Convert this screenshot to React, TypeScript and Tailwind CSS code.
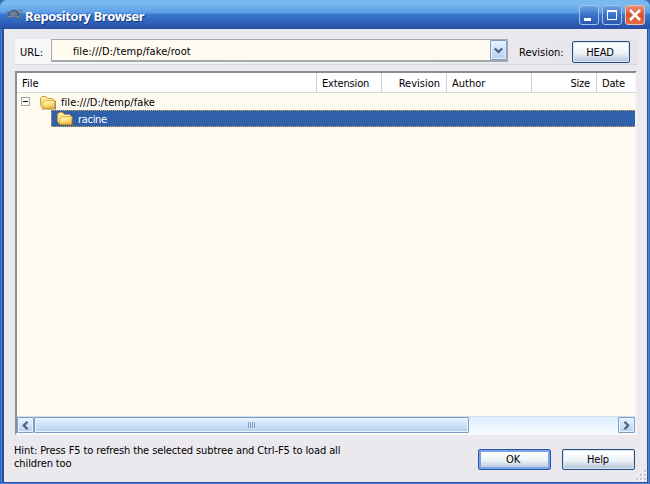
import type { ReactNode } from 'react';

function Folder() {
  return (
    <svg width="16" height="14" viewBox="0 0 16 14" className="shrink-0" aria-hidden="true">
      <defs>
        <linearGradient id="folderFill" x1="0" y1="0" x2="0.4" y2="1">
          <stop offset="0" stopColor="#fff6c0" />
          <stop offset="0.5" stopColor="#fde88e" />
          <stop offset="1" stopColor="#f1c04c" />
        </linearGradient>
      </defs>
      <path d="M2 12.9h13.3V5" fill="none" stroke="#7d642a" strokeWidth="1" />
      <path d="M.5 9.5v-7l1.5-2h3.5l2 2h5l1.5 1.5v8H2.5z" fill="#fbe38a" stroke="#c99324" strokeWidth=".9" />
      <path d="M3 12.2 2.6 6.3l2-.8 1-1H15l-.6 7.7z" fill="url(#folderFill)" stroke="#d6a336" strokeWidth=".8" />
      <path d="M2 1.6h3.3L7.2 3.5h5.3" fill="none" stroke="#fff7cd" strokeWidth=".8" />
    </svg>
  );
}

function Turtle() {
  return (
    <svg width="17" height="12" viewBox="0 0 17 12" className="shrink-0" aria-hidden="true">
      <path d="M2.5 6 .5 4.5 3 4zM3 7.5 1.2 9.5h3L6 8zm7 .5 1.5 2H14l-2-3zM11.5 5.5l2-3.7 2.5.4v1.6L14.3 5 12 7z" fill="#a09c95" stroke="#4b4f58" strokeWidth=".5" />
      <path d="M2.5 6.5 4.5 3.5 7 2.3h2.5l2.2 1.4.8 2.5L10.5 8H4z" fill="#59748f" stroke="#2e3d52" strokeWidth=".8" />
      <path d="m5 4.2 2 .8 3-1M7 5v2M4 6h6" fill="none" stroke="#8299ad" strokeWidth=".7" />
      <path d="M3.5 8.1h7.5" stroke="#a9a6a0" strokeWidth=".8" />
    </svg>
  );
}

function XpButton({ children, focused = false, className }: { children: ReactNode; focused?: boolean; className: string }) {
  return (
    <button
      className={`flex shrink-0 items-center justify-center rounded-[2px] border bg-linear-to-b from-white from-10% via-[#eef3f6] via-55% to-[#adc0d7] ${
        focused ? 'border-[#2856a5] shadow-[inset_0_0_0_2px_#7ba5e6]' : 'border-[#234d89] shadow-[inset_0_0_0_1px_#dce6ef]'
      } ${className}`}
    >
      {children}
    </button>
  );
}

function Chevron({ d }: { d: string }) {
  return (
    <svg width="9" height="9" viewBox="0 0 9 9" className="shrink-0" aria-hidden="true">
      <path d={d} fill="none" stroke="#4d6185" strokeWidth="2.3" />
    </svg>
  );
}

const scrollFace = 'border border-[#7c9fc8] rounded-[1px] bg-linear-to-b from-[#e8f3ff] via-[#cfe2fa] to-[#b5cfe9] shadow-[inset_0_0_0_1px_#e5f1fd]';

function CaptionButton({ children, close = false }: { children: ReactNode; close?: boolean }) {
  return (
    <button
      className={`h-5 w-5 rounded-[3px] border ${
        close ? 'border-[#efc0b3] bg-linear-to-b from-[#eb9075] via-[#d9512b] to-[#e36c46]' : 'border-[#a1c4ef] bg-linear-to-b from-[#70a5e1] via-[#3c72c9] to-[#2b57b0]'
      }`}
    >
      <svg width="18" height="18" viewBox="0 0 18 18" fill="none" stroke="white" shapeRendering="crispEdges">
        {children}
      </svg>
    </button>
  );
}

export default function App() {
  return (
    <div className="h-[484px] w-[650px] overflow-hidden bg-[#4468b1] font-['DejaVu_Sans_Condensed','DejaVu_Sans',sans-serif] text-[11px] leading-[13px] text-black [font-stretch:condensed]">
      <div className="flex h-full flex-col overflow-hidden rounded-t-[7px] bg-[#4d83d5]">
        <header className="flex h-[29px] shrink-0 items-center border-b border-[#284fa2] bg-[linear-gradient(to_bottom,#78b9ed_0px,#79b9ee_4px,#5b9ce6_13px,#397bd1_14px,#336bc2_19px,#284fa8_28px)] pr-[5px] pl-[6px]">
          <Turtle />
          <h1 className="ml-[2px] flex-1 pt-[3px] font-['Open_Sans',sans-serif] text-[13px] leading-4 font-bold tracking-[-0.44px] text-white [font-stretch:normal] [text-shadow:1px_1px_0_#17377d]">
            <span className="block w-max">Repository Browser</span>
          </h1>
          <div className="flex gap-[3px] pt-[2px]">
            <CaptionButton><path d="M4 13.5h7" strokeWidth="3" /></CaptionButton>
            <CaptionButton><path d="M4 5h10M4.5 4v10M13.5 4v10M4 13.5h10" strokeWidth="1" /><path d="M4 5h10" strokeWidth="2" /></CaptionButton>
            <CaptionButton close><path d="m4 4 10 10M14 4 4 14" strokeWidth="2.5" shapeRendering="auto" /></CaptionButton>
          </div>
        </header>

        <div className="flex min-h-0 flex-1 border-r border-l border-[#3666be] pr-px pb-px pl-px">
          <main className="flex min-w-0 flex-1 flex-col border-r border-b border-l-2 border-[#2850a2] bg-[#ebe9ee] pt-[10px] pr-[10px] pl-[11px]">
            <div className="flex h-[26px] shrink-0 border-b border-[#d5d3db] bg-linear-to-r from-[#f8f8fa] to-[#e6e4e9] pl-[5px]">
              <label className="w-[31px] shrink-0 pt-[7px]">URL:</label>
              <div className="flex h-[23px] w-[457px] shrink-0 border-[#a6a9ae] bg-[#fffbf0] [border-width:1px_1px_2px_1px]">
                <span className="flex-1 pt-[5px] pl-[21px] tracking-[0.07px]">file:///D:/temp/fake/root</span>
                <button className={`flex h-5 w-[17px] items-center justify-center ${scrollFace}`}><Chevron d="M.8 2.5 4.5 6 8.2 2.5" /></button>
              </div>
              <span className="w-16 shrink-0 pt-[7px] pl-[11px]">Revision:</span>
              <XpButton className="mt-[2px] h-[22px] w-[58px] pr-[2px] tracking-[-0.2px]">HEAD</XpButton>
            </div>

            <section className="mt-[6px] flex h-[364px] shrink-0 flex-col border-2 border-t-[#8b8d91] border-r-[#f2f1f3] border-b-[#f8f8fa] border-l-[#8b8d91] bg-[#fffbf0]">
              <div className="grid h-5 shrink-0 grid-cols-[300px_65px_65px_85px_65px_1fr] border-b border-[#d8d8dc] bg-white [&>span]:border-[#d1d1d5] [&>span]:pt-1">
                <span className="border-r pl-[5px]">File</span>
                <span className="border-r pl-[5px] tracking-[-0.15px]">Extension</span>
                <span className="border-r pr-[6px] text-right">Revision</span>
                <span className="border-r pl-[5px]">Author</span>
                <span className="border-r pr-[6px] text-right tracking-[-0.2px]">Size</span>
                <span className="pl-[5px] tracking-[-0.2px]">Date</span>
              </div>
              <div className="flex h-[17px] shrink-0 items-center pl-1">
                <span className="flex h-[9px] w-[9px] items-center justify-center border border-[#a6a6a2] bg-white"><i className="h-px w-[5px] bg-black" /></span>
                <span className="ml-[10px] flex pt-0.5"><Folder /></span>
                <span className="ml-[5px] pt-px tracking-[0.05px]">file:///D:/temp/fake</span>
              </div>
              <div className="ml-[34px] flex h-[17px] shrink-0 items-center border border-r-0 border-dotted border-[#d4a854] bg-[#3160aa] pl-[5px] text-white">
                <span className="pt-px"><Folder /></span><span className="ml-[5px] pt-px tracking-[-0.3px]">racine</span>
              </div>
              <div className="mt-auto flex h-[17px] shrink-0 border-t border-[#d0dfed] bg-linear-to-b from-[#dcecff] to-[#f8fbff]">
                <button className={`flex w-[17px] shrink-0 items-center justify-center ${scrollFace}`}><Chevron d="M6.5.8 2.8 4.5 6.5 8.2" /></button>
                <div className={`flex h-4 w-[435px] shrink-0 items-center justify-center gap-px ${scrollFace}`}>
                  <i className="h-[6px] w-px bg-[#829fc4]" /><i className="h-[6px] w-px bg-[#829fc4]" /><i className="h-[6px] w-px bg-[#829fc4]" /><i className="h-[6px] w-px bg-[#829fc4]" />
                </div>
                <button className={`ml-auto flex w-[17px] shrink-0 items-center justify-center ${scrollFace}`}><Chevron d="M2.5.8 6.2 4.5 2.5 8.2" /></button>
              </div>
            </section>

            <footer className="-mr-[10px] flex flex-1">
              <p className="-ml-px w-[353px] shrink-0 pt-[9px] tracking-[-0.11px]">Hint: Press F5 to refresh the selected subtree and Ctrl-F5 to load all children too</p>
              <XpButton focused className="mt-[14px] ml-auto h-[21px] w-[73px] pr-[3px] tracking-[-0.2px]">OK</XpButton>
              <XpButton className="mt-[14px] ml-[11px] h-[21px] w-[73px] pr-px tracking-[-0.2px]">Help</XpButton>
              <svg className="ml-px shrink-0 self-end" width="11" height="12" viewBox="0 0 11 12" shapeRendering="crispEdges" aria-hidden="true">
                <path d="M1 9h2v2H1zm4 0h2v2H5zm4 0h2v2H9zM5 5h2v2H5zm4 0h2v2H9zM9 1h2v2H9z" fill="white" />
                <path d="M0 8h2v2H0zm4 0h2v2H4zm4 0h2v2H8zM4 4h2v2H4zm4 0h2v2H8zM8 0h2v2H8z" fill="#c6c3cc" />
              </svg>
            </footer>
          </main>
        </div>
      </div>
    </div>
  );
}
